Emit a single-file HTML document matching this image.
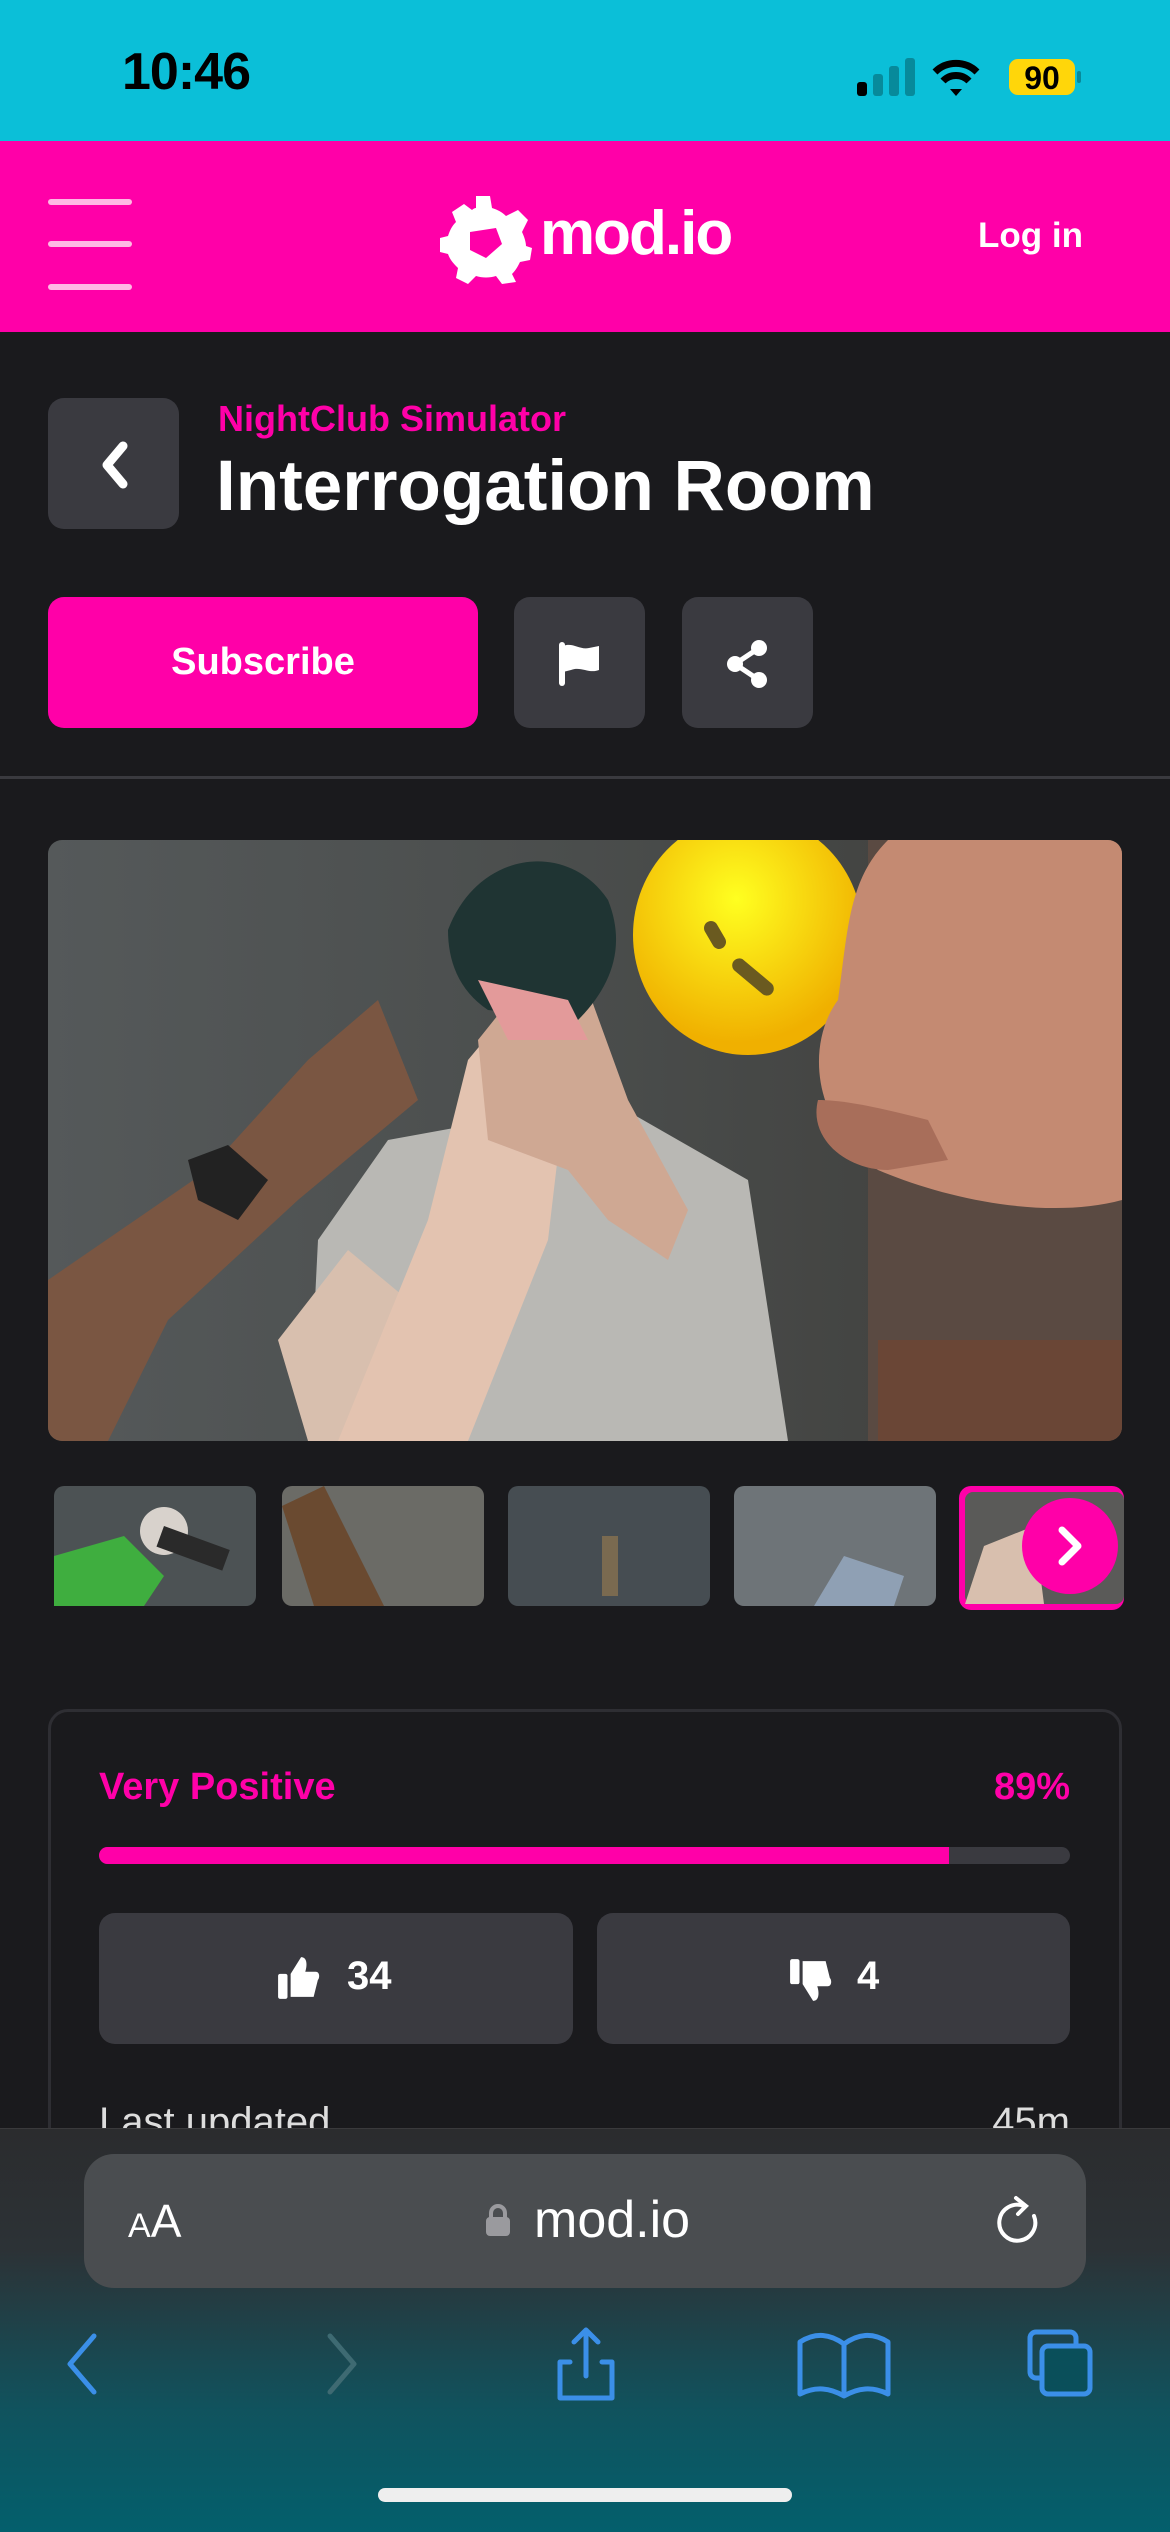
<!DOCTYPE html>
<html><head><meta charset="utf-8"><style>
*{margin:0;padding:0;box-sizing:border-box}
body{width:1170px;height:2532px;overflow:hidden;background:#1a1a1d;font-family:"Liberation Sans",sans-serif;position:relative}
.abs{position:absolute}
.status{left:0;top:0;width:1170px;height:141px;background:#0bbfd8}
.hdr{left:0;top:141px;width:1170px;height:191px;background:#ff00a8}
.btn{background:#3a3a40;border-radius:16px}
</style></head><body>
<div class="abs status"></div>
<div class="abs" style="left:122px;top:42px;font-size:52px;font-weight:600;color:#000;letter-spacing:-1px">10:46</div>
<svg class="abs" style="left:855px;top:56px" width="240" height="44" viewBox="0 0 240 44">
<rect x="2" y="26" width="10" height="14" rx="3" fill="#000"/>
<rect x="18" y="18" width="10" height="22" rx="3" fill="#078a9b"/>
<rect x="34" y="10" width="10" height="30" rx="3" fill="#078a9b"/>
<rect x="50" y="2" width="10" height="38" rx="3" fill="#078a9b"/>
<path d="M80 16 A30 30 0 0 1 122 16" stroke="#000" stroke-width="7" fill="none"/>
<path d="M88 25 A18 18 0 0 1 114 25" stroke="#000" stroke-width="7" fill="none"/>
<path d="M95 33 L101 40 L107 33 Z" fill="#000"/>
<rect x="154" y="3" width="66" height="36" rx="9" fill="#ffd60a"/>
<text x="187" y="33" font-size="32" font-weight="700" text-anchor="middle" font-family="Liberation Sans">90</text>
<rect x="222" y="15" width="4" height="12" rx="2" fill="#078a9b"/>
</svg>
<div class="abs hdr"></div>
<div class="abs" style="left:48px;top:199px;width:84px;height:6px;border-radius:3px;background:#ffb8e4"></div>
<div class="abs" style="left:48px;top:241px;width:84px;height:6px;border-radius:3px;background:#ffb8e4"></div>
<div class="abs" style="left:48px;top:284px;width:84px;height:6px;border-radius:3px;background:#ffb8e4"></div>
<svg class="abs" style="left:440px;top:194px" width="92" height="90" viewBox="0 0 92 90">
<path d="M36 2 L50 2 L52 14 C58 16 62 18 66 22 L78 16 L88 26 L82 38 C84 42 86 48 86 52 L92 54 L90 66 L80 68 C78 72 76 76 72 80 L76 88 L62 90 L56 82 C50 84 42 84 36 82 L28 90 L16 84 L18 74 C14 70 10 66 8 60 L0 58 L0 44 L8 42 C10 36 12 32 16 28 L12 18 L24 10 L32 16 C34 14 36 14 36 14 Z" fill="#fff"/>
<path d="M30 38 L56 34 L62 50 L46 64 L30 56 Z" fill="#ff00a8"/>
</svg>
<div class="abs" style="left:540px;top:198px;font-size:62px;font-weight:700;color:#fff;letter-spacing:-2px">mod.io</div>
<div class="abs" style="left:978px;top:216px;font-size:35px;font-weight:700;color:#fff">Log in</div>

<div class="abs btn" style="left:48px;top:398px;width:131px;height:131px"></div>
<svg class="abs" style="left:95px;top:440px" width="40" height="50" viewBox="0 0 40 50"><path d="M28 6 L12 25 L28 44" stroke="#fff" stroke-width="9" stroke-linecap="round" stroke-linejoin="round" fill="none"/></svg>
<div class="abs" style="left:218px;top:398px;font-size:36px;font-weight:700;color:#ff00a8">NightClub Simulator</div>
<div class="abs" style="left:216px;top:446px;font-size:71px;font-weight:700;color:#fff">Interrogation Room</div>

<div class="abs" style="left:48px;top:597px;width:430px;height:131px;background:#ff00a8;border-radius:16px;color:#fff;font-size:38px;font-weight:700;text-align:center;line-height:131px">Subscribe</div>
<div class="abs btn" style="left:514px;top:597px;width:131px;height:131px"></div>
<svg class="abs" style="left:555px;top:640px" width="50" height="48" viewBox="0 0 50 48"><rect x="4" y="2" width="6" height="44" rx="3" fill="#fff"/><path d="M8 6 C18 2 24 10 34 8 L44 6 L44 30 C34 34 26 26 16 30 L8 32 Z" fill="#fff"/></svg>
<div class="abs btn" style="left:682px;top:597px;width:131px;height:131px"></div>
<svg class="abs" style="left:725px;top:638px" width="48" height="52" viewBox="0 0 48 52"><circle cx="34" cy="10" r="8" fill="#fff"/><circle cx="10" cy="26" r="8" fill="#fff"/><circle cx="34" cy="42" r="8" fill="#fff"/><path d="M34 10 L10 26 L34 42" stroke="#fff" stroke-width="5" fill="none"/></svg>
<div class="abs" style="left:0;top:776px;width:1170px;height:3px;background:#3a3a3f"></div>

<svg class="abs" style="left:48px;top:840px;border-radius:14px" width="1074" height="601" viewBox="0 0 1074 601">
<defs>
<radialGradient id="yl" cx="0.45" cy="0.35" r="0.6"><stop offset="0" stop-color="#ffff20"/><stop offset="1" stop-color="#f0b000"/></radialGradient>
<linearGradient id="wall" x1="0" x2="1"><stop offset="0" stop-color="#55595a"/><stop offset="0.5" stop-color="#4a4d4c"/><stop offset="1" stop-color="#3e3d3a"/></linearGradient>
</defs>
<rect width="1074" height="601" fill="url(#wall)"/>
<rect x="820" y="0" width="254" height="601" fill="#5a4a42"/>
<rect x="830" y="500" width="244" height="101" fill="#6a4636"/>
<path d="M260 601 L270 400 L340 300 L560 260 L700 340 L740 601 Z" fill="#b9b8b4"/>
<path d="M260 601 L230 500 L300 410 L360 460 L330 601 Z" fill="#d8bfae"/>
<path d="M0 601 L0 440 L160 330 L260 220 L330 160 L370 260 L250 360 L120 480 L60 601 Z" fill="#7a5642"/>
<path d="M140 320 L180 305 L220 340 L190 380 L150 360 Z" fill="#222"/>
<path d="M290 601 L380 380 L420 220 L470 160 L520 230 L500 400 L420 601 Z" fill="#e3c3b0"/>
<path d="M440 300 L430 200 L470 150 L540 150 L580 260 L640 370 L620 420 L560 380 L520 330 Z" fill="#cfa893"/>
<path d="M400 90 C430 10 520 0 560 60 C580 110 560 150 530 180 L440 170 C410 150 400 120 400 90 Z" fill="#1f3433"/>
<path d="M430 140 L520 160 L540 200 L460 200 Z" fill="#e39a9a"/>
<ellipse cx="700" cy="95" rx="115" ry="120" fill="url(#yl)"/>
<rect x="660" y="80" width="14" height="30" rx="7" fill="#6a5a20" transform="rotate(-30 667 95)"/>
<rect x="680" y="130" width="50" height="14" rx="7" fill="#6a5a20" transform="rotate(40 705 137)"/>
<path d="M840 0 L1074 0 L1074 360 C1000 380 900 360 830 330 C760 280 760 200 790 160 C800 90 800 40 840 0 Z" fill="#c48a72"/>
<path d="M770 260 C760 300 800 330 840 330 L900 320 L880 280 C840 270 800 260 770 260 Z" fill="#a86e5a"/>
</svg>

<svg class="abs" style="left:54px;top:1486px" width="1070" height="124" viewBox="0 0 1070 124">
<rect x="0" y="0" width="202" height="120" rx="10" fill="#4c5254"/>
<path d="M0 120 L0 70 L70 50 L110 90 L90 120 Z" fill="#3fae3f"/>
<circle cx="110" cy="45" r="24" fill="#d8d2cc"/><rect x="110" y="40" width="70" height="22" fill="#2a2a2a" transform="rotate(20 110 40)"/>
<rect x="228" y="0" width="202" height="120" rx="10" fill="#6b6b66"/>
<path d="M228 20 L270 0 L330 120 L260 120 Z" fill="#6a4a30"/>
<rect x="454" y="0" width="202" height="120" rx="10" fill="#464d52"/>
<rect x="548" y="50" width="16" height="60" fill="#7a6a50"/>
<rect x="680" y="0" width="202" height="120" rx="10" fill="#6e7478"/>
<path d="M760 120 L790 70 L850 90 L840 120 Z" fill="#8fa0b4"/>
<rect x="905" y="0" width="165" height="124" rx="12" fill="#ff00a8"/>
<rect x="911" y="6" width="159" height="112" rx="8" fill="#5a5a58"/>
<path d="M911 118 L930 60 L980 40 L990 118 Z" fill="#d8bfae"/>
<circle cx="1016" cy="60" r="48" fill="#ff00a8"/>
<path d="M1008 44 L1024 60 L1008 76" stroke="#fff" stroke-width="7" stroke-linecap="round" stroke-linejoin="round" fill="none"/>
</svg>

<div class="abs" style="left:48px;top:1709px;width:1074px;height:600px;border:3px solid #2e2e33;border-radius:20px"></div>
<div class="abs" style="left:99px;top:1766px;font-size:38px;font-weight:700;color:#ff00a8">Very Positive</div>
<div class="abs" style="left:960px;top:1766px;width:110px;text-align:right;font-size:38px;font-weight:700;color:#ff00a8">89%</div>
<div class="abs" style="left:99px;top:1847px;width:971px;height:17px;border-radius:9px;background:#3a3a40;overflow:hidden"><div style="width:850px;height:17px;background:#ff00a8"></div></div>
<div class="abs btn" style="left:99px;top:1913px;width:474px;height:131px"></div>
<div class="abs btn" style="left:597px;top:1913px;width:473px;height:131px"></div>
<svg class="abs" style="left:276px;top:1955px" width="46" height="46" viewBox="0 0 44 44"><rect x="2" y="18" width="9" height="24" rx="2" fill="#fff"/><path d="M14 18 L24 2 C30 2 30 10 28 16 L38 16 C42 16 42 22 40 24 L36 40 L14 40 Z" fill="#fff"/></svg>
<div class="abs" style="left:347px;top:1954px;font-size:40px;font-weight:700;color:#fff">34</div>
<svg class="abs" style="left:788px;top:1957px" width="46" height="46" viewBox="0 0 44 44"><rect x="2" y="2" width="9" height="24" rx="2" fill="#fff"/><path d="M14 26 L24 42 C30 42 30 34 28 28 L38 28 C42 28 42 22 40 20 L36 4 L14 4 Z" fill="#fff"/></svg>
<div class="abs" style="left:857px;top:1954px;font-size:40px;font-weight:700;color:#fff">4</div>
<div class="abs" style="left:99px;top:2100px;font-size:40px;color:#ddd">Last updated</div>
<div class="abs" style="left:960px;top:2100px;width:110px;text-align:right;font-size:40px;color:#ddd">45m</div>

<div class="abs" style="left:0;top:2128px;width:1170px;height:404px;background:linear-gradient(#2b2c2e 0%,#2c3236 30%,#10535e 70%,#035f6c 100%);border-top:1px solid #3a3a3c"></div>
<div class="abs" style="left:84px;top:2154px;width:1002px;height:134px;border-radius:30px;background:#4a4d50"></div>
<div class="abs" style="left:128px;top:2194px;font-size:46px;color:#fff"><span style="font-size:34px">A</span>A</div>
<svg class="abs" style="left:486px;top:2204px" width="24" height="32" viewBox="0 0 24 32"><path d="M5 14 V9 A7 7 0 0 1 19 9 V14" stroke="#9a9a9e" stroke-width="4" fill="none"/><rect x="0" y="13" width="24" height="19" rx="4" fill="#9a9a9e"/></svg>
<div class="abs" style="left:534px;top:2190px;font-size:52px;color:#fff">mod.io</div>
<svg class="abs" style="left:994px;top:2194px" width="48" height="52" viewBox="0 0 48 52"><path d="M30 12 A18 18 0 1 0 40 22" stroke="#fff" stroke-width="4" fill="none" stroke-linecap="round"/><path d="M22 4 L32 12 L24 20" stroke="#fff" stroke-width="4" fill="none" stroke-linecap="round"/></svg>
<svg class="abs" style="left:60px;top:2326px" width="1060" height="80" viewBox="0 0 1060 80">
<path d="M34 10 L10 38 L34 66" stroke="#3b8fe8" stroke-width="5" fill="none" stroke-linecap="round" stroke-linejoin="round"/>
<path d="M270 10 L294 38 L270 66" stroke="#3e6a72" stroke-width="5" fill="none" stroke-linecap="round" stroke-linejoin="round"/>
<path d="M510 36 H500 V72 H552 V36 H542 M526 50 V4 M514 16 L526 4 L538 16" stroke="#3b8fe8" stroke-width="5" fill="none" stroke-linecap="round" stroke-linejoin="round"/>
<path d="M740 68 V16 C756 6 770 8 784 18 C798 8 812 6 828 16 V68 C812 60 798 62 784 70 C770 62 756 60 740 68 Z M784 18 V70" stroke="#3b8fe8" stroke-width="5" fill="none" stroke-linejoin="round"/>
<rect x="970" y="6" width="46" height="46" rx="6" stroke="#3b8fe8" stroke-width="5" fill="none"/>
<rect x="982" y="20" width="48" height="48" rx="6" stroke="#3b8fe8" stroke-width="5" fill="#0a4f5a"/>
</svg>
<div class="abs" style="left:378px;top:2488px;width:414px;height:14px;border-radius:7px;background:#eee"></div>
</body></html>
